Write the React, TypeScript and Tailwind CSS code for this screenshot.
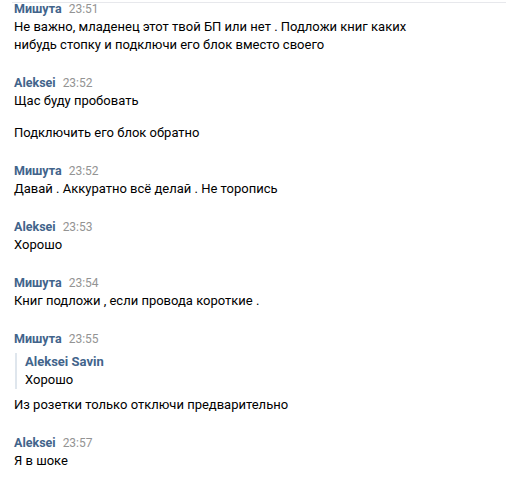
type Msg = { text: string; quote?: { author: string; text: string } };
type Group = { author: string; time: string; messages: Msg[] };

const groups: Group[] = [
  {
    author: "Мишута",
    time: "23:51",
    messages: [
      {
        text: "Не важно, младенец этот твой БП или нет . Подложи книг каких нибудь стопку и подключи его блок вместо своего",
      },
    ],
  },
  {
    author: "Aleksei",
    time: "23:52",
    messages: [{ text: "Щас буду пробовать" }, { text: "Подключить его блок обратно" }],
  },
  {
    author: "Мишута",
    time: "23:52",
    messages: [{ text: "Давай . Аккуратно всё делай . Не торопись" }],
  },
  { author: "Aleksei", time: "23:53", messages: [{ text: "Хорошо" }] },
  {
    author: "Мишута",
    time: "23:54",
    messages: [{ text: "Книг подложи , если провода короткие ." }],
  },
  {
    author: "Мишута",
    time: "23:55",
    messages: [
      {
        quote: { author: "Aleksei Savin", text: "Хорошо" },
        text: "Из розетки только отключи предварительно",
      },
    ],
  },
  { author: "Aleksei", time: "23:57", messages: [{ text: "Я в шоке" }] },
];

function Message({ msg }: { msg: Msg }) {
  return (
    <div className="flex flex-col">
      {msg.quote && (
        <div className="mt-[5px] mb-[7px] ml-px border-l-2 border-[#dfe6ed] pl-[8px]">
          <div className="font-bold text-[#42648b] leading-[18px]">{msg.quote.author}</div>
          <div className="leading-[18px]">{msg.quote.text}</div>
        </div>
      )}
      <div className="w-[420px] leading-[18px]">{msg.text}</div>
    </div>
  );
}

export default function App() {
  return (
    <div className="relative w-[506px] h-[480px] overflow-hidden bg-white font-['Roboto',sans-serif] text-[13px] text-black">
      <div className="ml-[12px] mt-[2px] h-px bg-[#e7e8ec]" />
      <div className="-mt-[3px] flex flex-col gap-[20px] pl-[14px]">
        {groups.map((g, i) => (
          <div key={i} className="flex flex-col">
            <div className="flex items-baseline gap-[7px] leading-[18px]">
              <span className="font-bold text-[#42648b] text-[12.5px]">{g.author}</span>
              <span className="text-[#939393] text-[12px]">{g.time}</span>
            </div>
            <div className="flex flex-col gap-[14px]">
              {g.messages.map((m, j) => (
                <Message key={j} msg={m} />
              ))}
            </div>
          </div>
        ))}
      </div>
    </div>
  );
}
